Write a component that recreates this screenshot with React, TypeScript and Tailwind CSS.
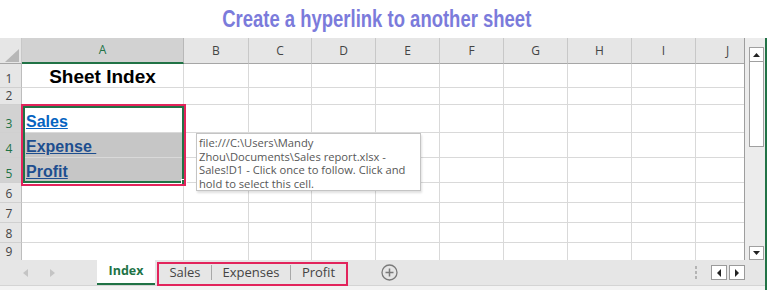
import React from "react";

const columns = [
  { label: "A", w: "w-[162px]" },
  { label: "B", w: "w-[65px]" },
  { label: "C", w: "w-[63px]" },
  { label: "D", w: "w-[64px]" },
  { label: "E", w: "w-[64px]" },
  { label: "F", w: "w-[64px]" },
  { label: "G", w: "w-[64px]" },
  { label: "H", w: "w-[64px]" },
  { label: "I", w: "w-[64px]" },
  { label: "J", w: "w-[64px]" },
];

const rows = [
  { n: 1, h: "h-[24px]" },
  { n: 2, h: "h-[17px]" },
  { n: 3, h: "h-[28px]" },
  { n: 4, h: "h-[25px]" },
  { n: 5, h: "h-[25px]" },
  { n: 6, h: "h-[20px]" },
  { n: 7, h: "h-[20px]" },
  { n: 8, h: "h-[20px]" },
  { n: 9, h: "h-[17px]" },
];

const ui = { fontFamily: '"Open Sans", "Liberation Sans", sans-serif' };
const arial = { fontFamily: '"Liberation Sans", Arial, sans-serif' };

function CellA({ n }: { n: number }) {
  if (n === 1) {
    return (
      <div
        className="w-full h-full flex items-end justify-center pb-[1px] text-[19px] font-bold text-black leading-none"
        style={arial}
      >
        Sheet Index
      </div>
    );
  }
  const links: Record<number, string> = { 3: "Sales", 4: "Expense\u00a0", 5: "Profit" };
  if (!links[n]) return null;
  return (
    <div className="w-full h-full flex items-end pl-[4px] pb-[2px]">
      <span
        className={`text-[16px] font-bold underline leading-none ${
          n === 3 ? "text-[#0563c1]" : "text-[#1d4e8f]"
        }`}
        style={arial}
      >
        {links[n]}
      </span>
    </div>
  );
}

export default function App() {
  return (
    <div className="w-[767px] h-[290px] overflow-hidden bg-white relative">
      {/* Title */}
      <div className="h-[38px] flex items-center justify-center pr-[14px]">
        <span
          className="inline-block text-[24px] font-bold text-[#7b7bdb] leading-none scale-x-[0.77]"
          style={arial}
        >
          Create a hyperlink to another sheet
        </span>
      </div>

      <div className="flex h-[252px]">
        <div className="w-[765px] flex flex-col">
          <div className="flex h-[222px]">
            {/* Sheet */}
            <div className="w-[744px] overflow-hidden flex flex-col">
              {/* Column headers */}
              <div className="flex h-[26px] shrink-0 bg-[#e6e6e6]" style={ui}>
                <div className="w-[22px] shrink-0 relative border-r border-[#c8c8c8] border-b border-b-[#a6a6a6]">
                  <svg className="absolute left-[5px] top-[11px]" width="14" height="13" viewBox="0 0 14 13">
                    <polygon points="14,0 14,13 0,13" fill="#b7b7b7" />
                  </svg>
                </div>
                {columns.map((c) => (
                  <div
                    key={c.label}
                    className={`${c.w} shrink-0 flex items-end justify-center pb-[3px] text-[12px] border-r ${
                      c.label === "A"
                        ? "bg-[#d2d2d2] text-[#217346] border-r-[#b8b8b8] border-b-2 border-b-[#217346]"
                        : "text-[#444] border-[#c8c8c8] border-b border-b-[#a6a6a6]"
                    }`}
                  >
                    {c.label}
                  </div>
                ))}
              </div>
              {/* Rows */}
              {rows.map((r) => {
                const sel = r.n >= 3 && r.n <= 5;
                const last = r.n === 9;
                return (
                  <div key={r.n} className={`flex ${r.h} shrink-0`}>
                    <div
                      className={`w-[22px] shrink-0 flex justify-center pr-[3px] text-[12px] leading-none border-r border-[#bdbdbd] ${
                        last ? "items-center" : "items-end pb-[2px] border-b border-b-[#d0d0d0]"
                      } ${sel ? "bg-[#d2d2d2] text-[#217346]" : "bg-[#e6e6e6] text-[#444]"}`}
                      style={ui}
                    >
                      {r.n}
                    </div>
                    {columns.map((c) => (
                      <div
                        key={c.label}
                        className={`${c.w} shrink-0 border-r border-[#d9d9d9] ${last ? "" : "border-b"} ${
                          c.label === "A" && (r.n === 4 || r.n === 5) ? "bg-[#c6c6c6]" : "bg-white"
                        }`}
                      >
                        {c.label === "A" && <CellA n={r.n} />}
                      </div>
                    ))}
                  </div>
                );
              })}
            </div>

            {/* Vertical scrollbar */}
            <div className="w-[21px] bg-[#ececec] flex flex-col items-center pl-[4px] pr-[2px] pt-[9px] border-l border-[#9e9e9e]">
              <div className="w-[15px] h-[15px] bg-white border border-[#a0a0a0] flex items-center justify-center">
                <svg width="7" height="4" viewBox="0 0 7 4">
                  <polygon points="0,4 7,4 3.5,0" fill="#222" />
                </svg>
              </div>
              <div className="w-[15px] h-[85px] bg-white border border-[#a0a0a0] border-t-0" />
              <div className="flex-1" />
              <div className="w-[15px] h-[14px] bg-white border border-[#a0a0a0] flex items-center justify-center">
                <svg width="7" height="4" viewBox="0 0 7 4">
                  <polygon points="0,0 7,0 3.5,4" fill="#222" />
                </svg>
              </div>
            </div>
          </div>

          {/* Tab bar */}
          <div className="h-[26px] bg-[#e6e6e6] flex items-stretch border-b border-[#d4d4d4]" style={ui}>
            <div className="w-[97px] flex items-center pl-[23px] gap-[22px]">
              <svg width="5" height="8" viewBox="0 0 5 8">
                <polygon points="5,0 5,8 0,4" fill="#c4c4c4" />
              </svg>
              <svg width="5" height="8" viewBox="0 0 5 8">
                <polygon points="0,0 0,8 5,4" fill="#c4c4c4" />
              </svg>
            </div>
            <div className="w-[58px] bg-white flex items-center justify-center border-b-2 border-[#217346] text-[12.5px] font-bold text-[#217346]">
              Index
            </div>
            <div className="ml-[4px] flex items-center text-[13px] text-[#444]">
              <div className="w-[52px] flex justify-center">Sales</div>
              <div className="w-[1px] h-[15px] bg-[#a8a8a8]" />
              <div className="w-[78px] flex justify-center">Expenses</div>
              <div className="w-[1px] h-[15px] bg-[#a8a8a8]" />
              <div className="w-[55px] flex justify-center">Profit</div>
            </div>
            <div className="ml-[35px] flex items-center">
              <svg width="17" height="17" viewBox="0 0 17 17">
                <circle cx="8.5" cy="8.5" r="7.5" fill="none" stroke="#7a7a7a" strokeWidth="1.3" />
                <path d="M8.5 4.5v8M4.5 8.5h8" stroke="#7a7a7a" strokeWidth="1.5" />
              </svg>
            </div>
            <div className="flex-1" />
            <div className="flex flex-col justify-center gap-[2px] mr-[14px]">
              <span className="w-[2px] h-[3px] bg-[#b4b4b4]" />
              <span className="w-[2px] h-[3px] bg-[#b4b4b4]" />
              <span className="w-[2px] h-[3px] bg-[#b4b4b4]" />
            </div>
            <div className="flex items-center gap-[2px] mr-[20px]">
              <div className="w-[16px] h-[15px] bg-white border border-[#9a9a9a] flex items-center justify-center">
                <svg width="4" height="8" viewBox="0 0 4 8">
                  <polygon points="4,0 4,8 0,4" fill="#222" />
                </svg>
              </div>
              <div className="w-[16px] h-[15px] bg-white border border-[#9a9a9a] flex items-center justify-center">
                <svg width="4" height="8" viewBox="0 0 4 8">
                  <polygon points="0,0 0,8 4,4" fill="#222" />
                </svg>
              </div>
            </div>
          </div>
          <div className="flex-1 bg-[#f3f3f3]" />
        </div>
        <div className="w-[2px] bg-[#217346]" />
      </div>

      {/* Selection border + fill handle */}
      <div className="absolute left-[23px] top-[106px] w-[161px] h-[77px] border-2 border-[#217346]" />
      <div className="absolute left-[181px] top-[179px] w-[6px] h-[6px] bg-[#217346] border border-white" />

      {/* Red annotation boxes */}
      <div className="absolute left-[21px] top-[104px] w-[165px] h-[82px] border-2 border-[#e2245c]" />
      <div className="absolute left-[157px] top-[262px] w-[191px] h-[24px] border-2 border-[#e2245c]" />

      {/* Hyperlink tooltip */}
      <div
        className="absolute left-[196px] top-[133px] w-[225px] h-[58px] bg-white border border-[#c4c4c4] shadow-[1px_2px_2px_rgba(0,0,0,0.12)] px-[2px] pt-[2px] text-[11.2px] leading-[13.5px] text-[#575757] whitespace-nowrap"
        style={ui}
      >
        <div>{"file:///C:\\Users\\Mandy"}</div>
        <div>{"Zhou\\Documents\\Sales report.xlsx -"}</div>
        <div>Sales!D1 - Click once to follow. Click and</div>
        <div>hold to select this cell.</div>
      </div>
    </div>
  );
}
